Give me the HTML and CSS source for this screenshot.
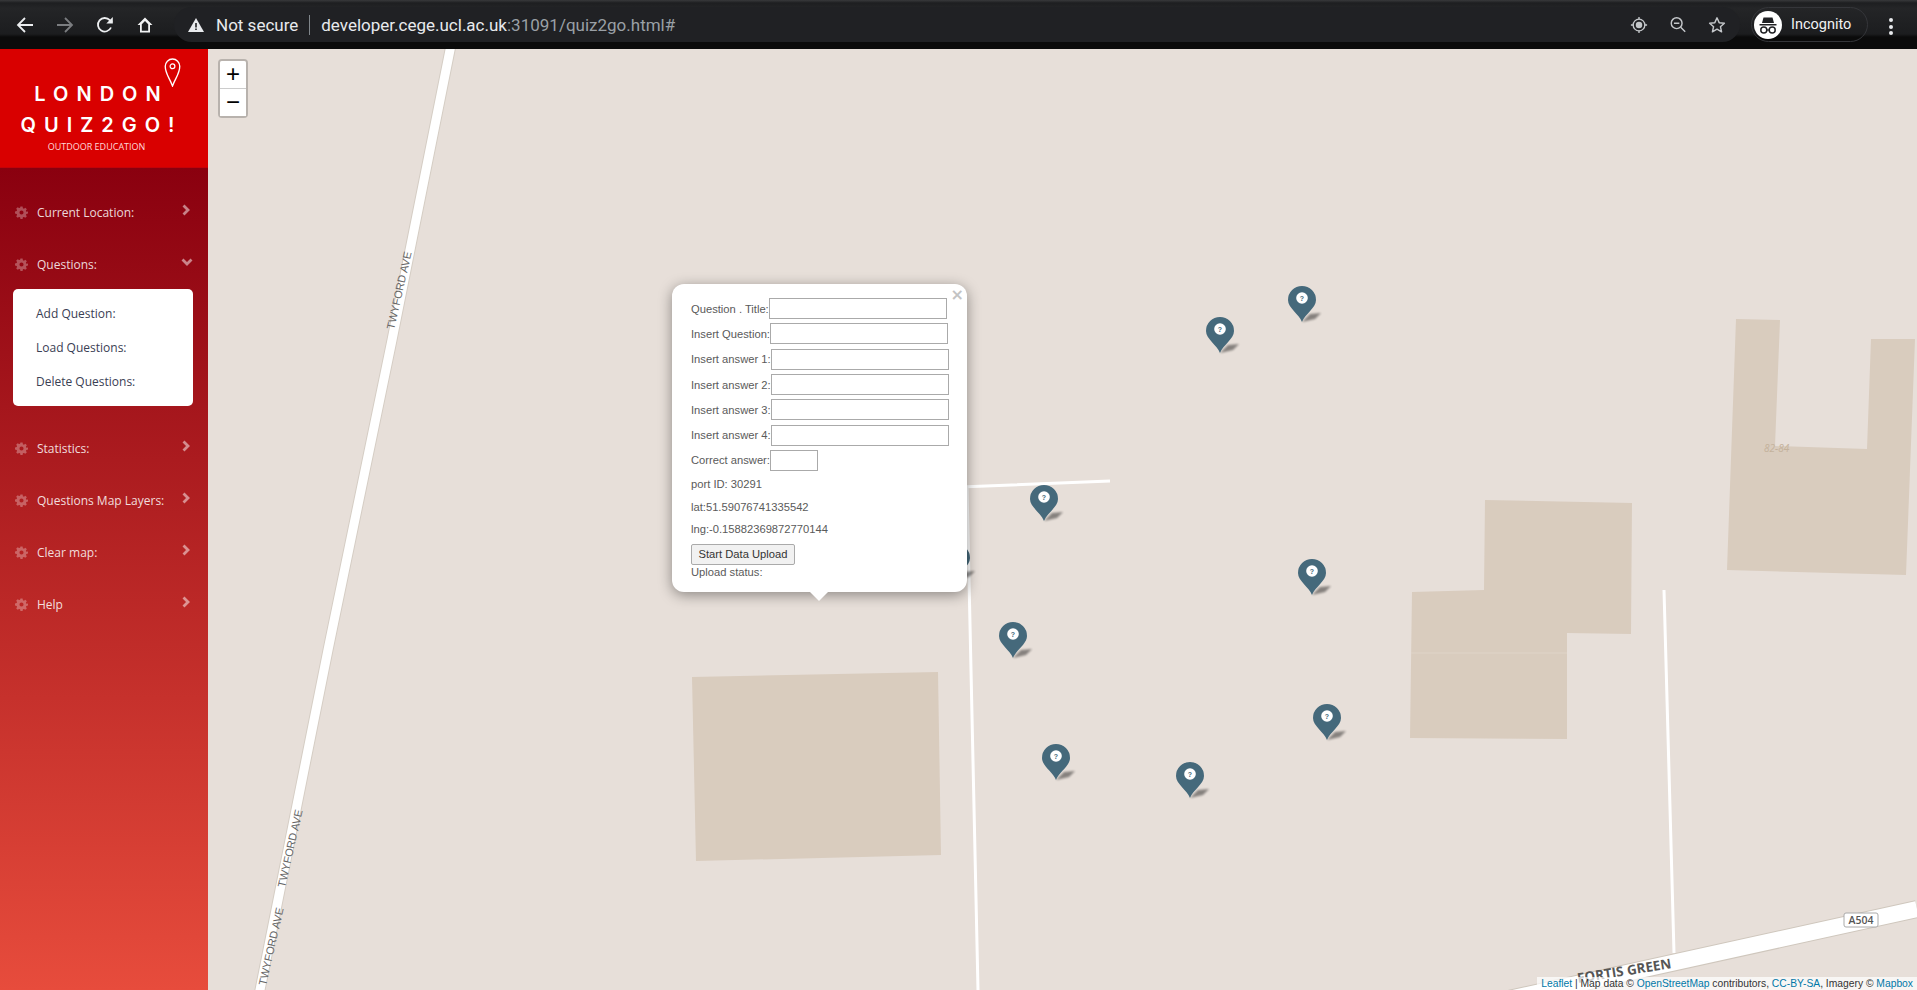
FILE: index.html
```html
<!DOCTYPE html>
<html>
<head>
  <title>London Quiz2Go</title>
  <link rel="stylesheet" href="styles.css">
</head>
<body>

<svg class="defs" width="0" height="0">
  <symbol id="gear" viewBox="0 0 24 24">
    <path d="M10 1h4l.6 3.1 1.9.8 2.6-1.8 2.8 2.8-1.8 2.6.8 1.9L24 10v4l-3.1.6-.8 1.9 1.8 2.6-2.8 2.8-2.6-1.8-1.9.8L14 24h-4l-.6-3.1-1.9-.8-2.6 1.8-2.8-2.8 1.8-2.6-.8-1.9L0 14v-4l3.1-.6.8-1.9L2.100 4.900l2.800-2.800 2.600 1.800 1.900-.8zM12 8.200a3.800 3.800 0 1 0 0 7.600 3.800 3.800 0 0 0 0-7.600z" fill-rule="evenodd"/>
  </symbol>
  <symbol id="chev-right" viewBox="0 0 8 12">
    <path d="M1.500 1.500 6 6l-4.500 4.500" fill="none" stroke="currentColor" stroke-width="2.800"/>
  </symbol>
  <symbol id="chev-down" viewBox="0 0 12 8">
    <path d="M1.500 1.500 6 6l4.500-4.500" fill="none" stroke="currentColor" stroke-width="2.800"/>
  </symbol>
</svg>

<!-- browser chrome -->
<div class="toolbar">
  <div class="nav-btns">
    <svg class="tb-icon" viewBox="0 0 18 18"><path d="M17 9H2M9 2 2 9l7 7" fill="none" stroke="#eceef0" stroke-width="1.800"/></svg>
    <svg class="tb-icon" viewBox="0 0 18 18"><path d="M1 9h15M9 2l7 7-7 7" fill="none" stroke="#7b7d80" stroke-width="1.800"/></svg>
    <svg class="tb-icon" viewBox="0 0 18 18"><path d="M15 11.500A6.800 6.800 0 1 1 13.800 4.200L16 6.300" fill="none" stroke="#eceef0" stroke-width="1.800"/><path d="M16.800 1v6.500h-6.500z" fill="#eceef0"/></svg>
    <svg class="tb-icon" viewBox="0 0 18 18"><path d="M9 1.500 1.500 9H4v7.500h10V9h2.500zM5.800 14.800V8.200L9 5l3.200 3.200v6.600z" fill="#f2f3f4" fill-rule="evenodd"/></svg>
  </div>
  <div class="omnibox">
    <svg class="warn" viewBox="0 0 16 14"><path d="M8 0 16 14H0z" fill="#e8eaed"/><path d="M7.200 5h1.600v4.500H7.200zM7.200 10.500h1.600V12H7.200z" fill="#202124"/></svg>
    <span class="not-secure">Not secure</span>
    <span class="url-sep"></span>
    <span class="url">developer.cege.ucl.ac.uk<span class="url-dim">:31091/quiz2go.html#</span></span>
    <div class="omni-icons">
      <svg class="tb-icon" viewBox="0 0 20 20"><circle cx="10" cy="10" r="6.500" fill="none" stroke="#c4c7ca" stroke-width="1.500"/><circle cx="10" cy="10" r="3.600" fill="#c4c7ca"/><path d="M10 1v3M10 16v3M1 10h3M16 10h3" stroke="#c4c7ca" stroke-width="1.500"/></svg>
      <svg class="tb-icon" viewBox="0 0 20 20"><circle cx="8.500" cy="8" r="6" fill="none" stroke="#c4c7ca" stroke-width="1.600"/><path d="M13 12.500l5 5M5.500 8h6" stroke="#c4c7ca" stroke-width="1.600"/></svg>
      <svg class="tb-icon" viewBox="0 0 20 20"><path d="M10 2l2.400 5.400 5.800.6-4.400 3.900 1.300 5.700L10 14.700l-5.100 2.900 1.300-5.700L1.800 8l5.800-.6z" fill="none" stroke="#c4c7ca" stroke-width="1.600" stroke-linejoin="round"/></svg>
    </div>
  </div>
  <div class="profile">
    <span class="avatar">
      <svg viewBox="0 0 28 28" width="28" height="28"><path d="M9.500 6.500h9l1.500 5.500H8z" fill="#202124"/><path d="M5.500 13h17v1.500h-17z" fill="#202124"/><circle cx="9.800" cy="19" r="3" fill="none" stroke="#202124" stroke-width="1.500"/><circle cx="18.200" cy="19" r="3" fill="none" stroke="#202124" stroke-width="1.500"/><path d="M12.800 19h2.400" stroke="#202124" stroke-width="1.300"/></svg>
    </span>
    <span class="profile-name">Incognito</span>
  </div>
  <div class="kebab"><i></i><i></i><i></i></div>
</div>

<div class="app">
  <aside class="sidebar">
    <div class="logo">
      <svg class="logo-pin" viewBox="0 0 16 28"><path d="M8 27C5 19 1 15 1 8a7 7 0 0 1 14 0c0 7-4 11-7 19z" fill="none" stroke="#fff" stroke-width="1.300"/><circle cx="8" cy="8" r="2.300" fill="none" stroke="#fff" stroke-width="1.200"/></svg>
      <div class="logo-line">LONDON</div>
      <div class="logo-line">QUIZ2GO!</div>
      <div class="logo-sub">OUTDOOR EDUCATION</div>
    </div>
    <ul class="menu">
      <li class="menu-item"><svg class="gear"><use href="#gear"/></svg><span class="menu-label">Current Location:</span><svg class="chev"><use href="#chev-right"/></svg></li>
      <li class="menu-item"><svg class="gear"><use href="#gear"/></svg><span class="menu-label">Questions:</span><svg class="chev chev-open"><use href="#chev-down"/></svg></li>
      <li class="submenu">
        <a>Add Question:</a>
        <a>Load Questions:</a>
        <a>Delete Questions:</a>
      </li>
      <li class="menu-item"><svg class="gear"><use href="#gear"/></svg><span class="menu-label">Statistics:</span><svg class="chev"><use href="#chev-right"/></svg></li>
      <li class="menu-item"><svg class="gear"><use href="#gear"/></svg><span class="menu-label">Questions Map Layers:</span><svg class="chev"><use href="#chev-right"/></svg></li>
      <li class="menu-item"><svg class="gear"><use href="#gear"/></svg><span class="menu-label">Clear map:</span><svg class="chev"><use href="#chev-right"/></svg></li>
      <li class="menu-item"><svg class="gear"><use href="#gear"/></svg><span class="menu-label">Help</span><svg class="chev"><use href="#chev-right"/></svg></li>
    </ul>
  </aside>

  <main class="map">
    <!-- map tiles, coordinates are page pixels -->
    <svg class="tiles" viewBox="208 49 1709 941">
      <defs>
        <filter id="soft" x="-30%" y="-60%" width="160%" height="220%"><feGaussianBlur stdDeviation="1.300"/></filter>
        <g id="pin">
          <path d="M0 0 8-8 19-9 13-3Z" fill="#000" opacity=".42" filter="url(#soft)"/>
          <path d="M0 0C-3-8-14-14-14-22A14 14 0 1 1 14-22C14-14 3-8 0 0Z" fill="#45697b"/>
          <circle cy="-24" r="5.800" fill="#fff"/>
          <text y="-21.500" class="pin-q">?</text>
        </g>
      </defs>

      <polygon class="bld" points="692,677 938,672 941,855 696,861"/>
      <polygon class="bld" points="1485,500 1632,503 1631,634 1567,633 1567,739 1410,738 1412,592 1484,590"/>
      <polygon class="bld" points="1736,319 1780,320 1775,446 1867,449 1871,339 1915,339 1906,575 1727,570"/>
      <path class="seam" d="M1411 653H1567"/>
      <text class="house-no" x="1764" y="452">82-84</text>

      <path class="road-case" d="M451 45 392 340 328 650 302 780 259 995"/>
      <path class="road" d="M451 45 392 340 328 650 302 780 259 995"/>
      <path class="lane" d="M967 487 978 990M960 487 1110 481M1664 590 1674 953"/>
      <path class="road-case-wide" d="M1917 909 1590 981 1450 1012"/>
      <path class="road-wide" d="M1917 909 1590 981 1450 1012"/>

      <text class="road-label" transform="translate(390 329) rotate(-77)">TWYFORD AVE</text>
      <text class="road-label" transform="translate(281 887) rotate(-77)">TWYFORD AVE</text>
      <text class="road-label" transform="translate(262 985) rotate(-77)">TWYFORD AVE</text>
      <text class="street-label" transform="translate(1578 983) rotate(-9)">FORTIS GREEN</text>

      <rect class="shield" x="1844" y="913" width="34" height="14" rx="2"/>
      <text class="shield-text" x="1861" y="924">A504</text>

      <use href="#pin" x="956" y="580"/>
      <use href="#pin" x="1220" y="353"/>
      <use href="#pin" x="1302" y="322"/>
      <use href="#pin" x="1044" y="521"/>
      <use href="#pin" x="1312" y="595"/>
      <use href="#pin" x="1013" y="658"/>
      <use href="#pin" x="1327" y="740"/>
      <use href="#pin" x="1056" y="780"/>
      <use href="#pin" x="1190" y="798"/>
    </svg>

    <div class="zoom-ctl">
      <a class="zoom-btn zoom-in">+</a>
      <a class="zoom-btn">&minus;</a>
    </div>

    <div class="popup">
      <a class="popup-close">&times;</a>
      <form class="popup-form">
        <div class="field">Question . Title:<input type="text" class="inp"></div>
        <div class="field">Insert Question:<input type="text" class="inp"></div>
        <div class="field">Insert answer 1:<input type="text" class="inp"></div>
        <div class="field">Insert answer 2:<input type="text" class="inp"></div>
        <div class="field">Insert answer 3:<input type="text" class="inp"></div>
        <div class="field">Insert answer 4:<input type="text" class="inp"></div>
        <div class="field">Correct answer:<input type="text" class="inp inp-short"></div>
        <div class="info">port ID: 30291</div>
        <div class="info">lat:51.59076741335542</div>
        <div class="info">lng:-0.15882369872770144</div>
        <button type="button" class="upload-btn">Start Data Upload</button>
        <div class="status">Upload status:</div>
      </form>
      <div class="popup-tip"></div>
    </div>

    <div class="attribution"><a>Leaflet</a> | Map data &copy; <a>OpenStreetMap</a> contributors, <a>CC-BY-SA</a>, Imagery &copy; <a>Mapbox</a></div>
  </main>
</div>

</body>
</html>
```

FILE: styles.css
```css
* { box-sizing: border-box; }
html, body { margin: 0; height: 100%; overflow: hidden; }
body { width: 1917px; height: 990px; font-family: "Open Sans", sans-serif; background: #e7dfd9; }
.defs { position: absolute; }

/* browser chrome */
.toolbar {
  height: 49px;
  display: flex;
  align-items: flex-start;
  padding-top: 7px;
  background: linear-gradient(#38393b 0, #1d1e20 3px, #242527 8px, #1c1d1f 34px, #0b0b0b 37px, #0b0b0b 100%);
}
.nav-btns { width: 174px; display: flex; gap: 22px; padding: 9px 0 0 16px; }
.tb-icon { width: 18px; height: 18px; flex: none; }
.omnibox {
  width: 1566px;
  height: 35px;
  display: flex;
  align-items: center;
  padding-left: 14px;
  border-radius: 18px;
  background: #202124;
  font-family: Roboto, sans-serif;
  font-size: 17px;
  color: #e8eaed;
}
.warn { width: 16px; height: 14px; flex: none; }
.not-secure { margin-left: 12px; }
.url-sep { width: 1px; height: 20px; margin: 0 11px; background: #80868b; }
.url-dim { color: #9aa0a6; }
.omni-icons { margin-left: auto; display: flex; gap: 21px; padding-right: 14px; }
.profile {
  width: 117px;
  height: 35px;
  margin-left: 11px;
  display: flex;
  align-items: center;
  padding-left: 2px;
  border: 1px solid #35363a;
  border-radius: 18px;
  font-family: Roboto, sans-serif;
  font-size: 14.500px;
  color: #f1f3f4;
}
.avatar { width: 28px; height: 28px; border-radius: 50%; background: #fff; }
.profile-name { margin-left: 9px; }
.kebab { margin-left: 21px; padding-top: 11px; display: flex; flex-direction: column; gap: 2.500px; }
.kebab i { width: 4px; height: 4px; border-radius: 50%; background: #e8eaed; }

/* layout */
.app { height: 941px; display: flex; }

/* sidebar */
.sidebar {
  width: 208px;
  flex: none;
  background: linear-gradient(#8a000f 119px, #e74c3c 100%);
  font-size: 12px;
  color: #fff;
}
.logo {
  position: relative;
  height: 119px;
  padding: 30px 5px 0 0;
  background: #d90000;
  text-align: center;
  border-bottom: 1px solid #c30208;
}
.logo-pin { position: absolute; left: 164px; top: 9px; width: 17px; height: 29px; }
.logo-line {
  font-family: Inter, sans-serif;
  font-size: 20px;
  font-weight: 600;
  line-height: 31px;
  letter-spacing: 8px;
}
.logo-sub { margin-right: 10px; font-size: 9px; line-height: 12px; color: #ffd9d9; }
.menu { list-style: none; margin: 0; padding: 18px 0 0; }
.menu-item { height: 52px; display: flex; align-items: center; padding: 0 18px 0 15px; color: rgba(255,255,255,.85); }
.gear { width: 13px; height: 13px; flex: none; fill: rgba(255,255,255,.3); }
.menu-label { margin-left: 9px; flex: 1; white-space: nowrap; }
.chev { width: 8px; height: 12px; flex: none; margin-top: -4px; color: rgba(255,255,255,.5); }
.chev-open { width: 12px; height: 8px; margin-right: -3px; }
.submenu {
  margin: -1px 15px 16px 13px;
  padding: 8px 0 7px 23px;
  border-radius: 5px;
  background: #fff;
}
.submenu a { display: block; line-height: 34px; color: #3a4054; }

/* map */
.map { position: relative; flex: 1; overflow: hidden; background: #e7dfd9; }
.tiles { position: absolute; left: 0; top: 0; width: 1709px; height: 941px; }
.bld { fill: #d9ccbe; }
.seam { stroke: #dfd4c8; stroke-width: 1; fill: none; }
.house-no { font-family: "Open Sans", sans-serif; font-size: 10px; font-style: italic; fill: #c4b29c; }
.road-case { fill: none; stroke: #d5cdc4; stroke-width: 11; }
.road { fill: none; stroke: #fff; stroke-width: 9; }
.lane { fill: none; stroke: #fff; stroke-width: 3; }
.road-case-wide { fill: none; stroke: #cfc7bd; stroke-width: 18; }
.road-wide { fill: none; stroke: #fff; stroke-width: 16; }
.road-label { font-family: "Liberation Sans", sans-serif; font-size: 11px; fill: #666; dominant-baseline: central; }
.street-label { font-family: "Open Sans", sans-serif; font-size: 13.500px; font-weight: 700; fill: #555; }
.shield { fill: #fff; stroke: #aaa; stroke-width: 1; }
.shield-text { font-family: "Open Sans", sans-serif; font-size: 10.500px; font-weight: 600; fill: #555; text-anchor: middle; }
.pin-q { font-family: "Liberation Sans", sans-serif; font-size: 7px; font-weight: 700; fill: #45697b; text-anchor: middle; }

/* leaflet controls */
.zoom-ctl {
  position: absolute;
  left: 10px;
  top: 10px;
  width: 30px;
  border: 2px solid rgba(0,0,0,.2);
  border-radius: 4px;
  background-clip: padding-box;
}
.zoom-btn {
  display: block;
  height: 27px;
  background: #fff;
  font: 24px/26px "Liberation Sans", sans-serif;
  text-align: center;
  color: #000;
}
.zoom-in { height: 28px; border-bottom: 1px solid #ccc; border-radius: 2px 2px 0 0; }
.popup {
  position: absolute;
  left: 464px;
  top: 235px;
  width: 295px;
  height: 308px;
  padding: 12px 0 0 19px;
  border-radius: 12px;
  background: #fff;
  box-shadow: 0 3px 14px rgba(0,0,0,.4);
  font: 11.200px "Liberation Sans", Arial, sans-serif;
  color: #5a5a5a;
}
.popup-close { position: absolute; right: 3px; top: 3px; font: bold 16px/16px "DejaVu Sans", sans-serif; color: #c3c3c3; }
.popup-tip {
  position: absolute;
  left: 138px;
  bottom: -9px;
  width: 0;
  height: 0;
  border-left: 9px solid transparent;
  border-right: 9px solid transparent;
  border-top: 9px solid #fff;
}
.field { height: 25.300px; display: flex; align-items: center; white-space: nowrap; }
.inp { height: 21px; margin: 0; padding: 0; border: 1px solid #aaa; background: #fff; }
.field .inp { flex: none; width: 178px; }
.field .inp-short { width: 48px; }
.info { height: 22.500px; line-height: 22.500px; }
.upload-btn {
  display: block;
  width: 104px;
  height: 21px;
  margin-top: 3px;
  padding: 0;
  border: 1px solid #aaa;
  border-radius: 2px;
  background: #f1f1f1;
  font: 11.200px "Liberation Sans", Arial, sans-serif;
  color: #333;
}
.status { line-height: 15px; }
.attribution {
  position: absolute;
  right: 0;
  bottom: 0;
  height: 13px;
  padding: 0 4px;
  background: rgba(255,255,255,.7);
  font: 10.300px/14px "Liberation Sans", Arial, sans-serif;
  color: #333;
  white-space: nowrap;
}
.attribution a { color: #0078a8; }
```
